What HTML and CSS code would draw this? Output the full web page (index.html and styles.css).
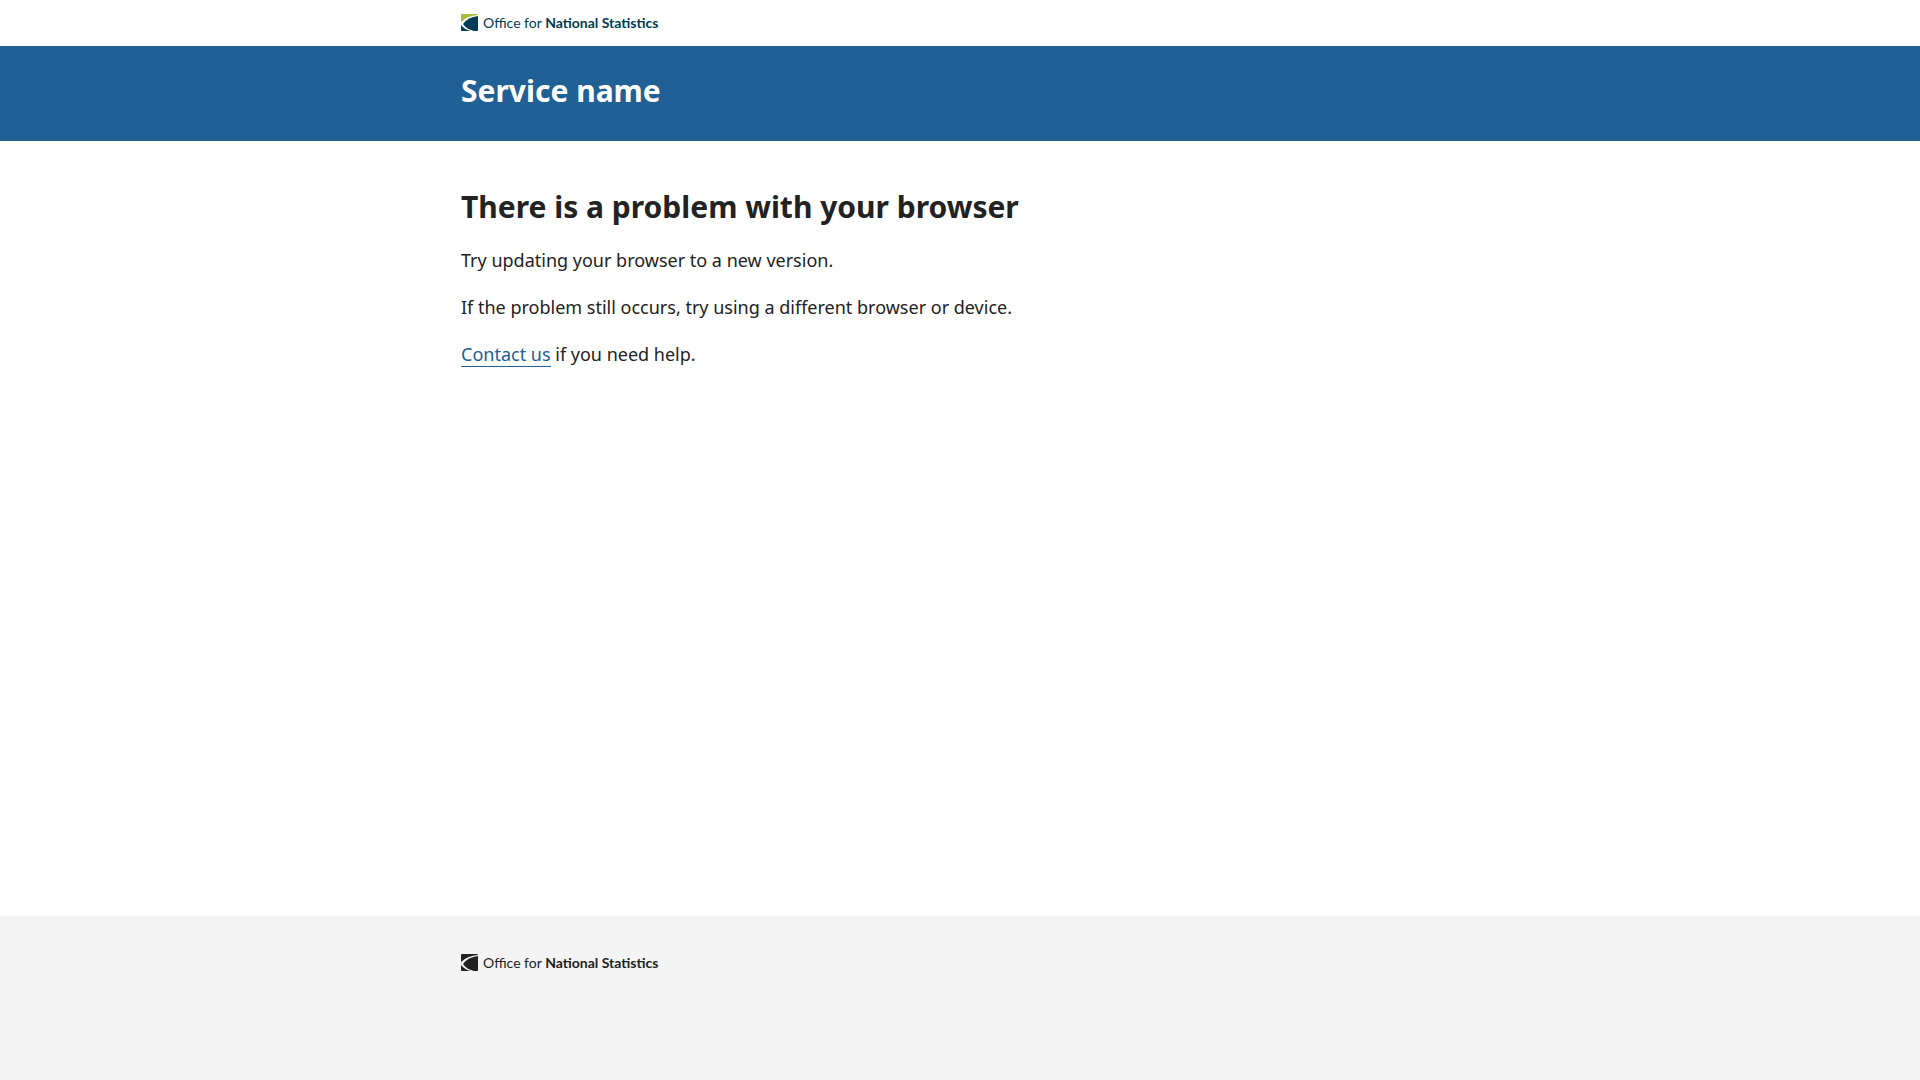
FILE: index.html
```html
<!DOCTYPE html>
<html lang="en">
<head>
<meta charset="utf-8">
<meta name="viewport" content="width=device-width, initial-scale=1">
<title>There is a problem with your browser</title>
<link rel="stylesheet" href="styles.css">
</head>
<body>
<header>
  <div class="top"><div class="container">
    <a class="logo" href="#">
      <svg class="logo-mark" viewBox="0 0 18 18" aria-hidden="true">
        <path class="mark-accent" d="M1 0H16L17 1Q6 2 0 8V1Q0 0 1 0Z"/>
        <path class="mark-body" d="M17 2V16Q17 17 16 17H13Q5 15 2 10Q7 3 17 2Z"/>
        <path class="mark-body" d="M0 11Q4 16 10 17H1Q0 17 0 16Z"/>
      </svg>
      <span class="logo-text">Office for <b>National Statistics</b></span>
    </a>
  </div></div>
  <div class="banner"><div class="container"><div class="service">Service name</div></div></div>
</header>
<main class="container main">
  <h1>There is a problem with your browser</h1>
  <p>Try updating your browser to a new version.</p>
  <p>If the problem still occurs, try using a different browser or device.</p>
  <p><a class="link" href="#">Contact us</a> if you need help.</p>
</main>
<footer class="footer"><div class="container">
  <a class="logo logo-mono" href="#">
    <svg class="logo-mark" viewBox="0 0 18 18" aria-hidden="true">
      <path class="mark-accent" d="M1 0H16L17 1Q6 2 0 8V1Q0 0 1 0Z"/>
      <path class="mark-body" d="M17 2V16Q17 17 16 17H13Q5 15 2 10Q7 3 17 2Z"/>
      <path class="mark-body" d="M0 11Q4 16 10 17H1Q0 17 0 16Z"/>
    </svg>
    <span class="logo-text">Office for <b>National Statistics</b></span>
  </a>
</div></footer>
</body>
</html>
```
FILE: styles.css
```css
* { box-sizing: border-box; }
body { margin: 0; min-height: 100vh; display: flex; flex-direction: column; font: 18px/29px "Noto Sans", sans-serif; color: #222; background: #fff; }
.container { width: 100%; max-width: 1030px; margin: 0 auto; padding: 0 16px; }
.top { padding: 14px 0; }
.logo { display: flex; align-items: center; gap: 4px; height: 18px; color: #003c57; text-decoration: none; }
.logo-mark { width: 18px; height: 18px; }
.mark-accent { fill: #a8bd3a; }
.mark-body { fill: #003c57; }
.logo-text { font: 14px/18px Lato, sans-serif; white-space: nowrap; }
.banner { background: #206095; color: #fff; padding: 24px 0 29px; }
.service { font-size: 30px; line-height: 42px; font-weight: 700; }
.main { flex: 1; padding-top: 45px; }
h1 { margin: 0 0 18px; font-size: 30px; line-height: 42px; }
p { margin: 0 0 18px; }
.link { color: #206095; text-decoration: none; box-shadow: 0 1px 0 #206095; }
.footer { background: #f4f4f4; padding: 38px 0 108px; }
.logo-mono { color: #222; }
.logo-mono .mark-accent, .logo-mono .mark-body { fill: #222; }
```
